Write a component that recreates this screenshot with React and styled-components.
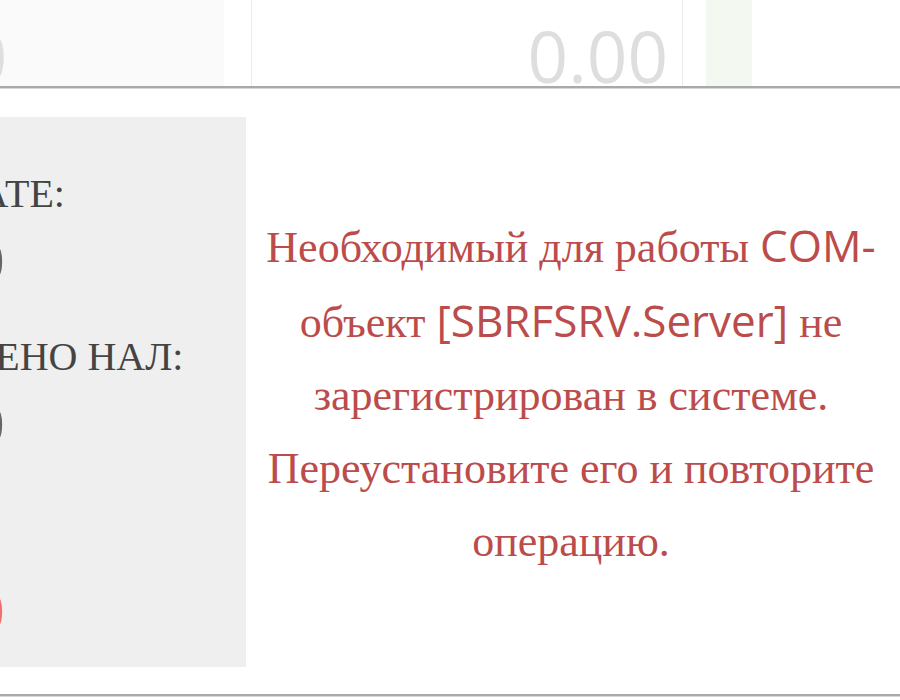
import React from "react";
import styled, { createGlobalStyle } from "styled-components";

const Global = createGlobalStyle`
  html, body { margin: 0; padding: 0; background: #fff; }
  body { width: 900px; height: 700px; overflow: hidden; }
  #root { width: 900px; height: 700px; overflow: hidden; }
`;

const Page = styled.div`
  width: 900px;
  height: 700px;
  display: flex;
  flex-direction: column;
  background: #fff;
  overflow: hidden;
`;

const TopRow = styled.div`
  height: 86px;
  flex: none;
  display: flex;
  border-bottom: 2px solid #a9a9a9;
  box-shadow: 0 1px 0 #d6d6d6;
  overflow: hidden;
`;

const Cell = styled.div`
  flex: none;
  width: ${(p) => p.$w}px;
  height: 100%;
  background: ${(p) => p.$bg || "#fff"};
  border-left: ${(p) => (p.$lineLeft ? "1px solid #ececec" : "none")};
  border-right: ${(p) => (p.$lineRight ? "1px solid #ececec" : "none")};
  box-sizing: border-box;
  overflow: hidden;
  text-align: ${(p) => p.$align || "left"};
  padding: 20px ${(p) => p.$padR || 0}px 0 0;
  white-space: nowrap;
`;

const Amount = styled.span`
  display: inline-block;
  font-family: "Open Sans", sans-serif;
  font-weight: 400;
  font-size: 71px;
  line-height: 71px;
  color: #dedede;
  margin-left: ${(p) => p.$shift || 0}px;
`;

const Modal = styled.div`
  flex: none;
  height: 608px;
  display: flex;
  padding: 29px 0 27px;
  box-sizing: border-box;
  border-bottom: 2px solid #a9a9a9;
  box-shadow: 0 1px 0 #d6d6d6;
`;

const Summary = styled.div`
  flex: none;
  width: 246px;
  height: 100%;
  background: #efefef;
  overflow: hidden;
  padding-top: 53px;
  box-sizing: border-box;
`;

const SummaryList = styled.div`
  width: 147px;
  margin-left: -142px;
  display: flex;
  flex-direction: column;
`;

const Label = styled.div`
  font-family: "Liberation Serif", serif;
  font-size: 40px;
  line-height: 48px;
  color: #444;
  white-space: nowrap;
  margin-bottom: 10px;
`;

const Value = styled.div`
  font-family: "Open Sans", sans-serif;
  font-size: 54px;
  line-height: 64px;
  text-align: right;
  color: ${(p) => p.$color || "#666"};
  white-space: nowrap;
  margin-top: ${(p) => p.$mt || 0}px;
  margin-bottom: 41px;
`;

const MessageArea = styled.div`
  flex: 1;
  display: flex;
  align-items: center;
  justify-content: center;
  padding: 2px 20px 0 16px;
`;

const Message = styled.p`
  margin: 0;
  text-align: center;
  font-family: "Liberation Serif", serif;
  font-size: 44px;
  line-height: 73px;
  color: #bb4c4b;
`;

const Latin = styled.span`
  font-family: "Open Sans", sans-serif;
`;

export default function App() {
  return (
    <>
      <Global />
      <Page>
        <TopRow>
          <Cell $w={224} $bg="#fafafa">
            <Amount $shift={-133}>0.00</Amount>
          </Cell>
          <Cell $w={27} />
          <Cell $w={432} $lineLeft $lineRight $align="right" $padR={14}>
            <Amount>0.00</Amount>
          </Cell>
          <Cell $w={23} />
          <Cell $w={46} $bg="#f3f8f1" />
        </TopRow>
        <Modal>
          <Summary>
            <SummaryList>
              <Label>К ОПЛАТЕ:</Label>
              <Value>0.00</Value>
              <Label>ПОЛУЧЕНО НАЛ:</Label>
              <Value>0.00</Value>
              <Label>СДАЧА</Label>
              <Value $color="#f36f6f" $mt={24}>0.00</Value>
            </SummaryList>
          </Summary>
          <MessageArea>
            <Message>
              Необходимый для работы <Latin>COM-</Latin> объект{" "}
              <Latin>[SBRFSRV.Server]</Latin> не зарегистрирован в системе.
              Переустановите его и повторите операцию.
            </Message>
          </MessageArea>
        </Modal>
      </Page>
    </>
  );
}
